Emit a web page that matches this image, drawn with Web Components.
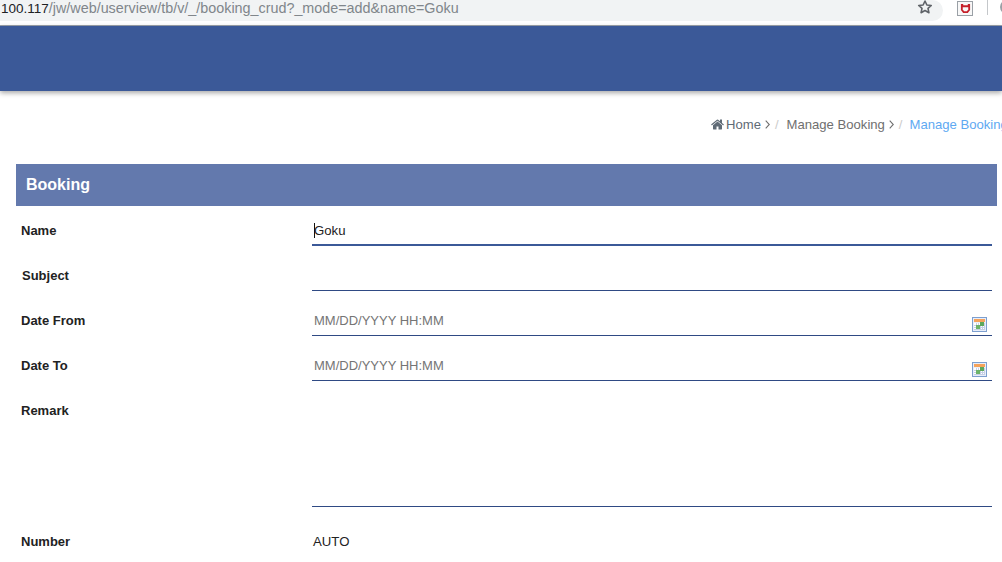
<!DOCTYPE html>
<html>
<head>
<meta charset="utf-8">
<title>Booking</title>
<style>
html, body { margin: 0; height: 100%; overflow: hidden; background: #fff; }
body { font-family: "Liberation Sans", Arial, sans-serif; font-size: 14px; }
</style>
</head>
<body>
<browser-bar url-host="100.117" url-path="/jw/web/userview/tb/v/_/booking_crud?_mode=add&amp;name=Goku"></browser-bar>
<app-header></app-header>
<bread-crumbs></bread-crumbs>
<form-panel heading="Booking">
	<form-row label="Name" first><text-field value="Goku" focused></text-field></form-row>
	<form-row label="Subject" nudge><text-field></text-field></form-row>
	<form-row label="Date From"><text-field placeholder="MM/DD/YYYY HH:MM" calendar></text-field></form-row>
	<form-row label="Date To"><text-field placeholder="MM/DD/YYYY HH:MM" calendar></text-field></form-row>
	<form-row label="Remark"><text-field tall></text-field></form-row>
	<form-row label="Number" last><span>AUTO</span></form-row>
</form-panel>

<script>
class BrowserBar extends HTMLElement {
	constructor() {
		super();
		this.attachShadow({ mode: "open" });
		this.shadowRoot.innerHTML = `
			<style>
				:host { display: block; height: 26px; box-sizing: border-box; border-bottom: 1px solid #9da3ab; display: flex; align-items: flex-start; background: #fff; overflow: hidden; }
				.omni { width: 943px; height: 21px; background: #f1f3f4; border-radius: 0 11px 11px 0; display: flex; align-items: center; justify-content: space-between; box-sizing: border-box; padding: 0 10px 0 1px; flex: none; }
				.url { font-size: 14.35px; color: #80868b; white-space: nowrap; margin-top: -6px; }
				.host { color: #202124; font-size: 13.5px; }
				.star { width: 16px; height: 16px; margin-top: -7px; margin-right: 0; }
				.tools { display: flex; align-items: flex-start; flex: 1; }
				.ext { width: 16px; height: 15px; box-sizing: border-box; border: 1px solid #9aa0a6; background: #f8f8f8; margin: 0 0 0 14px; display: flex; align-items: center; justify-content: center; margin-top: 1px; }
				.sep { width: 1px; height: 15px; background: #c4c7ca; margin-left: 14px; }
				.round { width: 14px; height: 14px; border-radius: 50%; border: 2px solid #9aa0a6; box-sizing: border-box; margin: 0 0 0 12px; flex: none; }
			</style>
			<div class="omni">
				<span class="url"><span class="host"></span><span class="path"></span></span>
				<svg class="star" viewBox="0 0 24 24" fill="none" stroke="#5f6368" stroke-width="2.4" stroke-linejoin="round"><path d="M12 3l2.8 6 6.6.7-4.9 4.4 1.4 6.5L12 17.3l-5.9 3.3 1.4-6.5L2.600 9.700l6.600-.7z"/></svg>
			</div>
			<div class="tools">
				<div class="ext"><svg width="11" height="11" viewBox="0 0 12 12"><path d="M1 1h2.500v1.500h5V1H11v6.500L8.500 11h-5L1 7.500z" fill="#c5202a"/><path d="M3 4.500h6v2.700L7.500 9h-3L3 7.200z" fill="#f8f8f8"/></svg></div>
				<div class="sep"></div>
				<div class="round"></div>
			</div>
		`;
		this.shadowRoot.querySelector(".host").textContent = this.getAttribute("url-host");
		this.shadowRoot.querySelector(".path").textContent = this.getAttribute("url-path");
	}
}
customElements.define("browser-bar", BrowserBar);

class AppHeader extends HTMLElement {
	constructor() {
		super();
		this.attachShadow({ mode: "open" });
		this.shadowRoot.innerHTML = `
			<style>
				:host { display: block; height: 65px; background: #3b5998; box-shadow: 0 2px 5px rgba(0,0,0,.35); }
			</style>
		`;
	}
}
customElements.define("app-header", AppHeader);

class BreadCrumbs extends HTMLElement {
	constructor() {
		super();
		this.attachShadow({ mode: "open" });
		this.shadowRoot.innerHTML = `
			<style>
				:host { display: flex; align-items: center; height: 73px; box-sizing: border-box; padding: 0 0 7px 711px; font-size: 13.1px; color: #6f6f6f; white-space: nowrap; overflow: hidden; }
				svg { width: 13px; height: 13px; margin-right: 2px; flex: none; }
				.slash { color: #ccc; margin: 0 7px 0 5px; }
				.chev { width: 5px; height: 9px; margin: 1px 0 0 4px; }
				.home { color: #5f6b76; }
				.active { color: #5ea9f2; }
			</style>
			<svg viewBox="0 0 1664 1408" fill="#5f6b76"><path d="M1408 800v480q0 26-19 45t-45 19H960V960H704v384H320q-26 0-45-19t-19-45V800l576-475zm224-69l-62 74q-8 9-21 11h-3q-13 0-21-7L832 228 139 809q-12 8-24 7-13-2-21-11l-62-74q-8-10-7-23.500T36 686L756 86q32-26 76-26t76 26l244 204V95q0-14 9-23t23-9h192q14 0 23 9t9 23v408l219 182q10 8 11 21.500t-7 23.500z"/></svg>
			<span class="home">Home</span>
			<svg class="chev" viewBox="0 0 5 9" fill="none" stroke="#6f6f6f" stroke-width="1.100"><path d="M.7.700L4.300 4.500.7 8.300"/></svg>
			<span class="slash">/</span>
			<span style="margin-left:1px">Manage Booking</span>
			<svg class="chev" viewBox="0 0 5 9" fill="none" stroke="#6f6f6f" stroke-width="1.100"><path d="M.7.700L4.300 4.500.7 8.300"/></svg>
			<span class="slash">/</span>
			<span class="active">Manage Booking</span>
		`;
	}
}
customElements.define("bread-crumbs", BreadCrumbs);

class FormPanel extends HTMLElement {
	constructor() {
		super();
		this.attachShadow({ mode: "open" });
		this.shadowRoot.innerHTML = `
			<style>
				:host { display: block; margin: 0 5px 0 16px; }
				h2 { margin: 0; height: 42px; line-height: 41px; padding-left: 10px; background: #6379ad; color: #fff; font-size: 16px; font-weight: bold; }
			</style>
			<h2></h2>
			<slot></slot>
		`;
		this.shadowRoot.querySelector("h2").textContent = this.getAttribute("heading");
	}
}
customElements.define("form-panel", FormPanel);

class FormRow extends HTMLElement {
	constructor() {
		super();
		this.attachShadow({ mode: "open" });
		this.shadowRoot.innerHTML = `
			<style>
				:host { display: grid; grid-template-columns: 296px 680px; padding-top: 14px; font-size: 13.2px; color: #222; }
				:host([first]) { padding-top: 9px; }
				:host([last]) { padding-top: 19px; }
				label { font-weight: bold; font-size: 13px; height: 31px; line-height: 31px; padding-left: 5px; color: #222; }
				:host([nudge]) label { padding-left: 6px; }
				.value { line-height: 31px; min-width: 0; }
				:host([last]) .value { padding-left: 1px; }
			</style>
			<label></label>
			<div class="value"><slot></slot></div>
		`;
		this.shadowRoot.querySelector("label").textContent = this.getAttribute("label");
	}
}
customElements.define("form-row", FormRow);

class TextField extends HTMLElement {
	constructor() {
		super();
		this.attachShadow({ mode: "open" });
		const placeholder = this.getAttribute("placeholder");
		const value = this.getAttribute("value");
		this.shadowRoot.innerHTML = `
			<style>
				:host { display: flex; align-items: flex-start; justify-content: space-between; height: 31px; box-sizing: border-box; border-bottom: 1px solid #2f4a84; padding-left: 2px; line-height: 31px; font-size: 13.2px; color: #222; }
				:host([tall]) { height: 112px; }
				:host([focused]) { border-bottom: 2px solid #3b5998; }
				.ph { color: #757575; font-size: 13px; }
				.text { position: relative; }
				.caret { position: absolute; left: 0; top: 8px; width: 1px; height: 15px; background: #111; }
				svg { width: 15px; height: 15px; margin: 12px 5px 0 0; flex: none; }
			</style>
			${placeholder ? `<span class="ph"></span>` : ""}
			${value ? `<span class="text"><span class="caret"></span><span class="val"></span></span>` : ""}
			${this.hasAttribute("calendar") ? `
				<svg viewBox="0 0 15 15" shape-rendering="crispEdges">
					<rect x=".5" y=".5" width="14" height="14" fill="#e8eefa" stroke="#7d9fcf"/>
					<rect x="2" y="2" width="11" height="3" fill="#f5a35c"/>
					<rect x="2" y="6" width="11" height="7" fill="#fff"/>
					<path d="M4 6v7M6 6v7M8 6v7M10 6v7M12 6v7M2 8h11M2 10h11M2 12h11" stroke="#c6d0e4" stroke-width="1" fill="none"/>
					<rect x="8" y="5" width="4" height="4" fill="#5da85c"/>
					<rect x="4" y="8" width="4" height="4" fill="#6db36a"/>
				</svg>` : ""}
		`;
		if (placeholder) this.shadowRoot.querySelector(".ph").textContent = placeholder;
		if (value) this.shadowRoot.querySelector(".val").textContent = value;
	}
}
customElements.define("text-field", TextField);
</script>
</body>
</html>
